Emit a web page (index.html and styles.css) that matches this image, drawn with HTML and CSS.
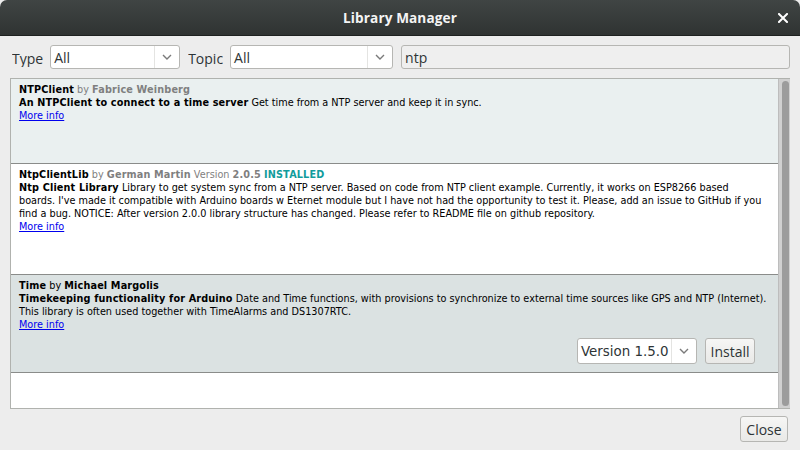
FILE: index.html
```html
<!DOCTYPE html>
<html>
<head>
<meta charset="utf-8">
<link rel="stylesheet" href="styles.css">
</head>
<body>
<div class="window">
  <div class="titlebar">
    <span class="title">Library Manager</span>
    <span class="close-x">
      <svg width="10" height="10" viewBox="0 0 10 10"><path d="M1 1 L9 9 M9 1 L1 9" stroke="#fff" stroke-width="2" stroke-linecap="square"/></svg>
    </span>
  </div>
  <div class="filters">
    <span class="label">Type</span>
    <div class="combo combo-type"><span class="combo-text">All</span><span class="combo-arrow"><svg width="10" height="6" viewBox="0 0 10 6"><path d="M1 1 L5 5 L9 1" fill="none" stroke="#7a7a7a" stroke-width="1.4"/></svg></span></div>
    <span class="label label-topic">Topic</span>
    <div class="combo combo-topic"><span class="combo-text">All</span><span class="combo-arrow"><svg width="10" height="6" viewBox="0 0 10 6"><path d="M1 1 L5 5 L9 1" fill="none" stroke="#7a7a7a" stroke-width="1.4"/></svg></span></div>
    <div class="search"><span class="search-text">ntp</span></div>
  </div>
  <div class="list">
    <div class="items">
      <div class="item item-a">
        <div class="line"><b>NTPClient</b> <span class="muted">by <b>Fabrice Weinberg</b></span></div>
        <div class="line"><b>An NTPClient to connect to a time server</b> Get time from a NTP server and keep it in sync.</div>
        <div class="line"><a class="more" href="#">More info</a></div>
      </div>
      <div class="item item-b">
        <div class="line"><b>NtpClientLib</b> <span class="muted">by <b>German Martin</b> Version <b>2.0.5</b></span> <b class="installed">INSTALLED</b></div>
        <div class="line"><b>Ntp Client Library</b> Library to get system sync from a NTP server. Based on code from NTP client example. Currently, it works on ESP8266 based</div>
        <div class="line">boards. I've made it compatible with Arduino boards w Eternet module but I have not had the opportunity to test it. Please, add an issue to GitHub if you</div>
        <div class="line">find a bug. NOTICE: After version 2.0.0 library structure has changed. Please refer to README file on github repository.</div>
        <div class="line"><a class="more" href="#">More info</a></div>
      </div>
      <div class="item item-c">
        <div class="line"><b>Time</b> by <b>Michael Margolis</b></div>
        <div class="line"><b>Timekeeping functionality for Arduino</b> Date and Time functions, with provisions to synchronize to external time sources like GPS and NTP (Internet).</div>
        <div class="line">This library is often used together with TimeAlarms and DS1307RTC.</div>
        <div class="line"><a class="more" href="#">More info</a></div>
        <div class="actions">
          <div class="combo combo-version"><span class="combo-text">Version 1.5.0</span><span class="combo-arrow"><svg width="10" height="6" viewBox="0 0 10 6"><path d="M1 1 L5 5 L9 1" fill="none" stroke="#7a7a7a" stroke-width="1.4"/></svg></span></div>
          <button class="btn btn-install">Install</button>
        </div>
      </div>
      <div class="item item-d"></div>
    </div>
    <div class="scroll"><div class="thumb"></div></div>
  </div>
  <div class="footer">
    <button class="btn btn-close">Close</button>
  </div>
</div>
</body>
</html>
```
FILE: styles.css
```css
html, body {
  margin: 0;
  padding: 0;
}
body {
  width: 800px;
  height: 450px;
  background: #ededed;
  overflow: hidden;
  font-family: "Open Sans", "Noto Sans", sans-serif;
}
.window {
  width: 800px;
  height: 450px;
  background: #ededed;
}
.titlebar {
  height: 36px;
  background: linear-gradient(#404544, #2f3332);
  border-radius: 7px 7px 0 0;
  border-bottom: 1px solid #1e2120;
  box-sizing: border-box;
  display: flex;
  align-items: center;
  justify-content: center;
  position: relative;
}
.title {
  color: #f4f4f4;
  font-weight: 700;
  font-size: 13.6px;
  letter-spacing: 0.1px;
}
.close-x {
  position: absolute;
  right: 12px;
  top: 13px;
  width: 10px;
  height: 10px;
  display: flex;
}
.filters {
  display: flex;
  align-items: center;
  height: 24px;
  margin: 9px 10px 0 12px;
}
.label {
  font-size: 14px;
  color: #2e3436;
  height: 18px;
  line-height: 20px;
  overflow: hidden;
  margin-right: 7px;
  margin-top: 2px;
  flex-shrink: 0;
}
.label-topic {
  margin-left: 8px;
}
.combo {
  height: 24px;
  box-sizing: border-box;
  border: 1px solid #b6b6b3;
  border-radius: 3px;
  background: #fff;
  display: flex;
  align-items: center;
  flex-shrink: 0;
}
.combo-text {
  flex: 1;
  font-size: 14px;
  color: #2e3436;
  padding-left: 3px;
  line-height: 20px;
  margin-top: 2px;
  white-space: nowrap;
}
.combo-arrow {
  width: 24px;
  height: 100%;
  border-left: 1px solid #e4e4e2;
  display: flex;
  align-items: center;
  justify-content: center;
  flex-shrink: 0;
}
.combo-type { width: 130px; }
.combo-topic { width: 163px; }
.search {
  flex: 1;
  margin-left: 8px;
  height: 24px;
  box-sizing: border-box;
  border: 1px solid #b6b6b3;
  border-radius: 3px;
  background: #efefef;
  display: flex;
  align-items: center;
}
.search-text {
  font-size: 14px;
  color: #2e3436;
  padding-left: 3px;
  line-height: 20px;
  margin-top: 2px;
}
.list {
  margin: 9px 10px 0 10px;
  height: 331px;
  box-sizing: border-box;
  border: 1px solid #b0b2ae;
  border-right: none;
  display: flex;
  background: #fff;
}
.items {
  flex: 1;
  min-width: 0;
  overflow: hidden;
  font-family: "DejaVu Sans", sans-serif;
  font-size: 9.7px;
  color: #000;
}
.items b {
  letter-spacing: 0.15px;
}
.item {
  padding: 4px 8px;
  box-sizing: border-box;
  border-bottom: 1px solid #8a8c8a;
}
.line {
  line-height: 13px;
  height: 13px;
  white-space: nowrap;
}
.item-a { height: 85px; background: #eaf0f0; }
.item-b { height: 111px; background: #fff; }
.item-c { height: 98px; background: #dbe2e2; }
.item-d { height: 35px; background: #fff; border-bottom: none; }
.muted { color: #7f7f7f; }
.installed { color: #119c9c; }
.more {
  color: #0000ee;
  text-decoration: underline;
}
.actions {
  display: flex;
  justify-content: flex-end;
  margin-top: 7px;
  margin-right: 15px;
  gap: 8px;
}
.combo-version {
  width: 120px;
  height: 26px;
}
.combo-version .combo-text {
  padding-left: 3px;
  font-size: 13.4px;
}
.btn {
  height: 26px;
  box-sizing: border-box;
  border: 1px solid #b6b6b3;
  border-radius: 3px;
  background: linear-gradient(#f6f6f5, #e9e9e7);
  font-family: "Open Sans", "Noto Sans", sans-serif;
  font-size: 14px;
  color: #2e3436;
  padding: 2px 4px 0 4px;
  line-height: 20px;
  flex-shrink: 0;
}
.btn-install { width: 50px; }
.scroll {
  width: 12px;
  flex-shrink: 0;
  background: #d0d0d0;
  border-left: 1px solid #bdbdbd;
  box-sizing: border-box;
  display: flex;
  justify-content: center;
  padding: 2px 0 2px 0;
}
.thumb {
  width: 7px;
  margin-left: 1px;
  background: #9c9c9c;
  border-radius: 4px;
}
.footer {
  display: flex;
  justify-content: flex-end;
  margin: 7px 12px 0 0;
}
.btn-close { width: 48px; }
```
